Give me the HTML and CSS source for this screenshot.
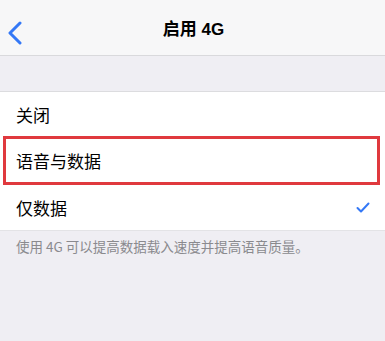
FILE: index.html
```html
<!DOCTYPE html>
<html lang="zh-CN">
<head>
    <meta charset="UTF-8">
    <meta name="viewport" content="width=device-width, initial-scale=1.0">
    <title>启用 4G</title>
    <link rel="stylesheet" href="styles.css">
</head>
<body>
    <div class="nav-bar">
        <svg class="back" width="16" height="24" viewBox="0 0 16 24">
            <path d="M13 2 L3 12 L13 22" fill="none" stroke="#3478f6" stroke-width="3" stroke-linecap="round" stroke-linejoin="round"/>
        </svg>
        <div class="title">启用 4G</div>
    </div>

    <div class="gap"></div>

    <div class="list">
        <div class="row first">关闭</div>
        <div class="row highlight">语音与数据</div>
        <div class="row last">
            <span>仅数据</span>
            <svg class="check" width="14" height="11" viewBox="0 0 14 11">
                <path d="M1.5 6 L5 9.5 L12.5 1.5" fill="none" stroke="#3478f6" stroke-width="2" stroke-linecap="round" stroke-linejoin="round"/>
            </svg>
        </div>
    </div>

    <p class="footer">使用 4G 可以提高数据载入速度并提高语音质量。</p>
</body>
</html>
```

FILE: styles.css
```css
body {
    margin: 0;
    font-family: "Noto Sans CJK SC", "Liberation Sans", sans-serif;
    background-color: #efeef3;
    color: #000;
    height: 341px;
    overflow: hidden;
}
.nav-bar {
    position: relative;
    height: 55px;
    background-color: #f7f7f8;
    border-bottom: 1px solid #d9d9dc;
    display: flex;
    align-items: center;
    justify-content: center;
}
.back {
    position: absolute;
    left: 7px;
    top: 21px;
}
.title {
    font-size: 17px;
    font-weight: bold;
    font-family: "Liberation Sans", "Noto Sans CJK SC", sans-serif;
    margin-left: 2px;
}
.gap {
    height: 35px;
    border-bottom: 1px solid #dcdcdf;
}
.list {
    background-color: #fff;
    border-bottom: 1px solid #e3e3e6;
}
.row {
    height: 46px;
    display: flex;
    align-items: center;
    justify-content: space-between;
    padding: 0 16px;
    font-size: 17px;
    box-sizing: border-box;
}
.row.first {
    height: 44px;
}
.row.highlight {
    height: 49px;
    margin: 0 5px 0 3px;
    padding-left: 10px;
    border: 3px solid #e0393e;
}
.row.last {
    height: 45px;
    padding-right: 15px;
}
.footer {
    margin: 0;
    padding: 6px 16px;
    font-size: 13.5px;
    line-height: 18px;
    color: #8a8a8e;
}
```
